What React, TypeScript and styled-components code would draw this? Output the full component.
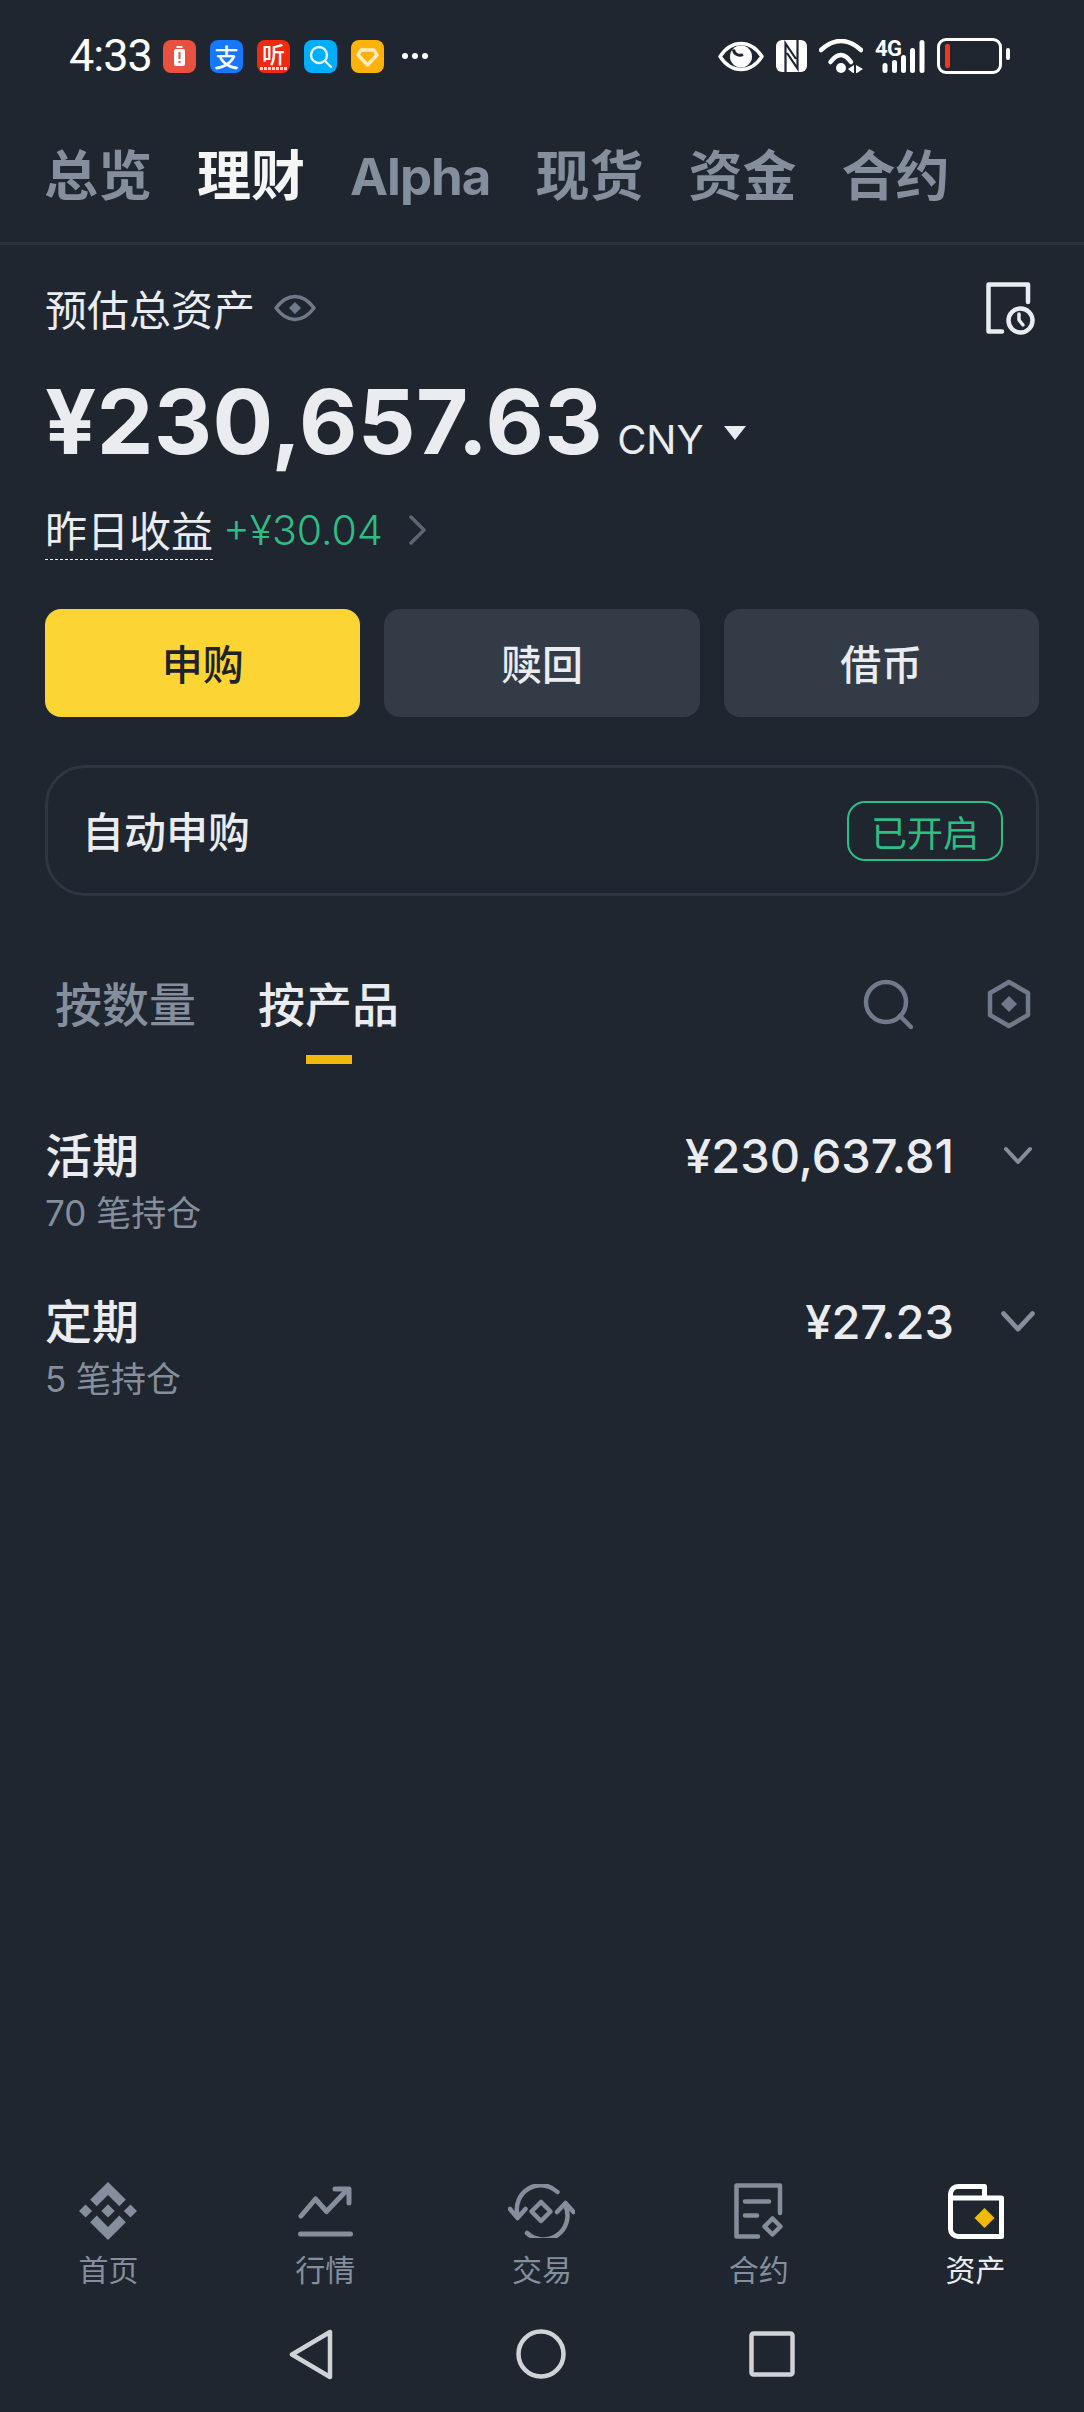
import React from "react"
import styled, { createGlobalStyle } from "styled-components"

const CJK = `"Noto Sans CJK SC", sans-serif`
const NUM = `Inter, "Noto Sans CJK SC", sans-serif`

const tabs = ["总览", "理财", "Alpha", "现货", "资金", "合约"]

export default function App() {
  return (
    <Page>
      <GlobalStyle />
      <StatusBar>
        <StatusLeft>
          <Time>4:33</Time>
          <AppIcons>
            <AppIcon $bg="#E8503F">
              <svg width="33" height="33" viewBox="0 0 33 33">
                <rect x="11" y="9" width="11" height="17" rx="2" fill="#fff" />
                <rect x="13.500" y="6" width="6" height="2" fill="#fff" />
                <rect x="15.500" y="12" width="2" height="7" fill="#E8503F" />
                <rect x="15.500" y="21" width="2" height="2" fill="#E8503F" />
              </svg>
            </AppIcon>
            <AppIcon $bg="#1677FF">
              <AppGlyph>支</AppGlyph>
            </AppIcon>
            <AppIcon $bg="#F0290F">
              <AppGlyph $top>听</AppGlyph>
              <AppIconFoot />
            </AppIcon>
            <AppIcon $bg="#00AEFF">
              <svg width="33" height="33" viewBox="0 0 33 33" fill="none" stroke="#E4F6FF" strokeWidth="2.400">
                <circle cx="15" cy="15" r="8" />
                <path d="M21 21l6 6" strokeLinecap="round" />
              </svg>
            </AppIcon>
            <AppIcon $bg="#FFB30A">
              <svg width="33" height="33" viewBox="0 0 33 33" fill="none" stroke="#FFEBC4" strokeWidth="3.400" strokeLinejoin="round">
                <path d="M10 10h13l3 5-9.500 10L7 15z" />
              </svg>
            </AppIcon>
          </AppIcons>
          <Dots>
            <i />
            <i />
            <i />
          </Dots>
        </StatusLeft>
        <StatusRight>
          <svg width="46" height="31" viewBox="0 0 46 31">
            <path d="M2 15.500C8 6.500 15 2.500 23 2.500S38 6.500 44 15.500C38 24.500 31 28.500 23 28.500S8 24.500 2 15.500Z" fill="none" stroke="#fff" strokeWidth="3.400" strokeLinejoin="round" />
            <circle cx="23" cy="15.500" r="11" fill="#fff" />
            <path d="M15.500 8.500a6.500 6.500 0 0 0 9.500 5" fill="none" stroke="#1F2630" strokeWidth="3" />
          </svg>
          <svg width="31" height="32" viewBox="0 0 31 32">
            <rect width="31" height="32" rx="6" fill="#fff" />
            <path d="M9.500 32V3.500L20 19M21.500 0v28.500L11 13" fill="none" stroke="#1F2630" strokeWidth="2.200" />
          </svg>
          <svg width="44" height="34" viewBox="0 0 44 34">
            <g fill="none" stroke="#fff" strokeWidth="4.500" strokeLinecap="round">
              <path d="M2 11Q22-7 42 11" />
              <path d="M11.500 23Q22 9 32 23" />
            </g>
            <circle cx="22" cy="29" r="5" fill="#fff" />
            <path d="M35 26v8h-1l-5-4ZM37 26v8h1l6-4Z" fill="#fff" />
          </svg>
          <svg width="50" height="33" viewBox="0 0 50 33" overflow="visible">
            <text x="0" y="16" fontFamily="Roboto, sans-serif" fontWeight="700" fontSize="22" fill="#fff" letterSpacing="-0.5">4G</text>
            <g fill="#fff">
              <rect x="7.500" y="23" width="5" height="10" rx="2.500" />
              <rect x="17" y="20" width="5" height="13" rx="2.500" />
              <rect x="26" y="15" width="5" height="18" rx="2.500" />
              <rect x="35" y="8" width="5" height="25" rx="2.500" />
              <rect x="44.500" y="0" width="5" height="33" rx="2.500" />
            </g>
          </svg>
          <Battery>
            <BatteryLevel />
            <BatteryNub />
          </Battery>
        </StatusRight>
      </StatusBar>

      <TabBar>
        {tabs.map((t, i) => (
          <Tab key={t} $active={i === 1} $latin={t === "Alpha"}>
            {t}
          </Tab>
        ))}
      </TabBar>

      <Content>
        <SummaryHead>
          <SummaryLabel>
            预估总资产
            <svg width="42" height="28" viewBox="0 0 42 28" fill="none" stroke="#707A8A" strokeWidth="3.500">
              <path d="M2 14C8 6 14 2.500 21 2.500S34 6 40 14C34 22 28 25.500 21 25.500S8 22 2 14Z" strokeLinejoin="round" />
              <path d="M21 8l6 6-6 6-6-6Z" fill="#707A8A" stroke="none" />
            </svg>
          </SummaryLabel>
          <svg width="50" height="53" viewBox="0 0 50 53" fill="none" stroke="#EAECEF" strokeWidth="4.500" strokeLinecap="round" strokeLinejoin="round">
            <path d="M16 49.500H2.500V2.500H42V20" />
            <circle cx="34.500" cy="38.500" r="12" />
            <path d="M33 32v6l4 5" strokeWidth="3.500" />
          </svg>
        </SummaryHead>

        <AmountRow>
          <Amount>¥230,657.63</Amount>
          <Currency>CNY</Currency>
          <Caret />
        </AmountRow>

        <EarningsRow>
          <EarningsLabel>昨日收益</EarningsLabel>
          <EarningsValue>+¥30.04</EarningsValue>
          <svg width="18" height="30" viewBox="0 0 18 30" fill="none" stroke="#5E6673" strokeWidth="3.500" strokeLinecap="round" strokeLinejoin="round">
            <path d="M2 2l13 13L2 28" />
          </svg>
        </EarningsRow>

        <Actions>
          <ActionButton $primary>申购</ActionButton>
          <ActionButton>赎回</ActionButton>
          <ActionButton>借币</ActionButton>
        </Actions>

        <AutoCard>
          <AutoLabel>自动申购</AutoLabel>
          <Badge>已开启</Badge>
        </AutoCard>

        <SubTabs>
          <SubTab>按数量</SubTab>
          <SubTab $active>按产品</SubTab>
          <SubTools>
            <svg width="50" height="50" viewBox="0 0 50 50" fill="none" stroke="#707A8A" strokeWidth="4.500" strokeLinecap="round">
              <circle cx="23" cy="23" r="20" />
              <path d="M37 37l11 11" />
            </svg>
            <svg width="44" height="50" viewBox="0 0 44 50" fill="none" stroke="#707A8A" strokeWidth="4.500" strokeLinejoin="round">
              <path d="M22 3l19 11v22L22 47 3 36V14Z" />
              <path d="M22 17l8 8-8 8-8-8Z" fill="#707A8A" stroke="none" />
            </svg>
          </SubTools>
        </SubTabs>

        <ProductList>
          <ProductRow>
            <div>
              <ProductName>活期</ProductName>
              <ProductMeta>70 笔持仓</ProductMeta>
            </div>
            <ProductValue>
              ¥230,637.81
              <Chevron />
            </ProductValue>
          </ProductRow>
          <ProductRow>
            <div>
              <ProductName>定期</ProductName>
              <ProductMeta>5 笔持仓</ProductMeta>
            </div>
            <ProductValue>
              ¥27.23
              <Chevron $large />
            </ProductValue>
          </ProductRow>
        </ProductList>
      </Content>

      <BottomNav>
        <NavItem>
          <NavIcon>
            <svg width="58" height="58" viewBox="0 0 126.640 126.640" fill="#848E9C">
              <path d="M38.730 53.200l24.590-24.580 24.600 24.600 14.300-14.310L63.320 0 24.430 38.900zM0 63.310l14.300-14.300 14.310 14.300-14.310 14.300zM38.730 73.410l24.590 24.590 24.600-24.600 14.310 14.290-38.900 38.910-38.910-38.880-.02-.02zM98.030 63.310l14.300-14.300 14.310 14.300-14.310 14.300zM77.830 63.300L63.320 48.780 48.810 63.280l14.510 14.500z" />
            </svg>
          </NavIcon>
          <NavLabel>首页</NavLabel>
        </NavItem>
        <NavItem>
          <NavIcon>
            <svg width="55" height="52" viewBox="0 0 55 52" fill="none" stroke="#848E9C" strokeWidth="5" strokeLinecap="round" strokeLinejoin="round">
              <path d="M3 31l14.500-17 11 12.500L49 5" />
              <path d="M37 4h14v14" />
              <path d="M2.500 49h50" />
            </svg>
          </NavIcon>
          <NavLabel>行情</NavLabel>
        </NavItem>
        <NavItem>
          <NavIcon>
            <svg width="67" height="54" viewBox="0 0 67 54" fill="none" stroke="#848E9C" strokeWidth="4.500" strokeLinecap="round" strokeLinejoin="round">
              <path d="M9.500 31A24 24 0 0 1 49.500 8" />
              <path d="M2 25l7.500 9 8-9" />
              <path d="M19 49A24 24 0 0 0 57.500 22" />
              <path d="M49 28l8.500-9 8 9" />
              <path d="M33 18l9.500 9.500L33 37l-9.500-9.500Z" />
            </svg>
          </NavIcon>
          <NavLabel>交易</NavLabel>
        </NavItem>
        <NavItem>
          <NavIcon>
            <svg width="50" height="56" viewBox="0 0 50 56" fill="none" stroke="#848E9C" strokeWidth="4.500" strokeLinecap="round" strokeLinejoin="round">
              <path d="M24 53.500H2.500V2.500H46V30" />
              <path d="M11 18.500h24M11 32.500h12" />
              <path d="M38.500 35.500l8 8-8 8-8-8Z" />
            </svg>
          </NavIcon>
          <NavLabel>合约</NavLabel>
        </NavItem>
        <NavItem>
          <NavIcon>
            <svg width="56" height="55" viewBox="0 0 56 55" fill="none" stroke="#fff" strokeWidth="5" strokeLinejoin="round">
              <path d="M2.500 14V10a7.500 7.500 0 0 1 7.500-7.500h26.500V14" />
              <path d="M2.500 14h51v38.500H10a7.500 7.500 0 0 1-7.500-7.500Z" />
              <path d="M36.500 24l10 10-10 10-10-10Z" fill="#F0B90B" stroke="none" />
            </svg>
          </NavIcon>
          <NavLabel $active>资产</NavLabel>
        </NavItem>
      </BottomNav>

      <SystemBar>
        <svg width="44" height="51" viewBox="0 0 44 51" fill="none" stroke="#D0D2D6" strokeWidth="4.500" strokeLinejoin="round">
          <path d="M41 3v45L3 25.500Z" />
        </svg>
        <svg width="50" height="50" viewBox="0 0 50 50" fill="none" stroke="#D0D2D6" strokeWidth="4.500">
          <circle cx="25" cy="25" r="22.500" />
        </svg>
        <svg width="46" height="46" viewBox="0 0 46 46" fill="none" stroke="#D0D2D6" strokeWidth="4.500" strokeLinejoin="round">
          <rect x="2.500" y="2.500" width="41" height="41" rx="2" />
        </svg>
      </SystemBar>
    </Page>
  )
}

const GlobalStyle = createGlobalStyle`
  html, body {
    margin: 0;
    padding: 0;
    background: #1f2630;
  }
  * {
    box-sizing: border-box;
  }
`
const Page = styled.div`
  display: flex;
  flex-direction: column;
  width: 1084px;
  height: 2412px;
  overflow: hidden;
  background: #1f2630;
  color: #eaecef;
  font-family: ${CJK};
  svg {
    display: block;
    flex-shrink: 0;
  }
`
const StatusBar = styled.div`
  display: flex;
  align-items: center;
  justify-content: space-between;
  height: 112px;
  padding: 0 82px 0 69px;
`
const StatusLeft = styled.div`
  display: flex;
  align-items: center;
`
const Time = styled.span`
  width: 94px;
  font-family: Roboto, sans-serif;
  font-size: 45px;
  line-height: 46px;
  letter-spacing: -1px;
  color: #fff;
`
const AppIcons = styled.div`
  display: flex;
  gap: 14px;
`
const AppIcon = styled.div<{ $bg: string }>`
  position: relative;
  display: flex;
  align-items: center;
  justify-content: center;
  width: 33px;
  height: 33px;
  border-radius: 8px;
  background: ${(p) => p.$bg};
`
const AppGlyph = styled.span<{ $top?: boolean }>`
  color: #fff;
  font-size: ${(p) => (p.$top ? 23 : 25)}px;
  font-weight: 500;
  line-height: ${(p) => (p.$top ? 24 : 33)}px;
  margin-bottom: ${(p) => (p.$top ? 7 : 0)}px;
`
const AppIconFoot = styled.i`
  position: absolute;
  left: 3px;
  right: 3px;
  bottom: 3px;
  height: 3px;
  background: repeating-linear-gradient(90deg, #ffd9d0 0 3px, transparent 3px 4px);
`
const Dots = styled.div`
  display: flex;
  gap: 4px;
  margin-left: 18px;
  i {
    width: 6px;
    height: 6px;
    border-radius: 50%;
    background: #fff;
  }
`
const StatusRight = styled.div`
  display: flex;
  align-items: center;
  gap: 12px;
`
const Battery = styled.div`
  position: relative;
  display: flex;
  align-items: center;
  width: 65px;
  height: 36px;
  padding-left: 5px;
  border: 3px solid #fff;
  border-radius: 9px;
`
const BatteryLevel = styled.i`
  width: 5px;
  height: 24px;
  border-radius: 2px;
  background: #f0381a;
`
const BatteryNub = styled.i`
  position: absolute;
  right: -11px;
  top: 7px;
  width: 4px;
  height: 12px;
  border-radius: 2px;
  background: #fff;
`
const TabBar = styled.div`
  display: flex;
  align-items: center;
  gap: 45px;
  height: 133px;
  padding: 0 45px 0 44px;
  border-bottom: 3px solid #2b3139;
`
const Tab = styled.span<{ $active?: boolean; $latin?: boolean }>`
  font-family: ${NUM};
  font-size: ${(p) => (p.$latin ? 51 : 54)}px;
  font-weight: 700;
  line-height: 70px;
  letter-spacing: ${(p) => (p.$latin ? "-1px" : "0")};
  color: ${(p) => (p.$active ? "#f5f5f5" : "#848e9c")};
`
const Content = styled.div`
  display: flex;
  flex-direction: column;
  flex: 1;
  padding: 0 45px;
`
const SummaryHead = styled.div`
  display: flex;
  align-items: center;
  justify-content: space-between;
  height: 60px;
  margin-top: 33px;
  padding-right: 3px;
`
const SummaryLabel = styled.div`
  display: flex;
  align-items: center;
  gap: 19px;
  font-size: 42px;
  line-height: 60px;
  color: #eaecef;
`
const AmountRow = styled.div`
  display: flex;
  align-items: baseline;
  height: 100px;
  margin-top: 34px;
`
const Amount = styled.span`
  font-family: ${NUM};
  font-size: 90px;
  font-weight: 700;
  line-height: 100px;
  letter-spacing: 0.5px;
  color: #eaecef;
`
const Currency = styled.span`
  margin-left: 14px;
  font-family: ${NUM};
  font-size: 40px;
  font-weight: 400;
  color: #eaecef;
`
const Caret = styled.i`
  align-self: flex-start;
  width: 0;
  height: 0;
  margin: 54px 0 0 20px;
  border-left: 11px solid transparent;
  border-right: 11px solid transparent;
  border-top: 14px solid #eaecef;
`
const EarningsRow = styled.div`
  display: flex;
  align-items: center;
  height: 60px;
  margin-top: 28px;
`
const EarningsLabel = styled.span`
  font-size: 42px;
  line-height: 58px;
  height: 60px;
  border-bottom: 1px dashed #eaecef;
`
const EarningsValue = styled.span`
  margin: 0 26px 0 10px;
  font-family: ${NUM};
  font-size: 41px;
  font-weight: 300;
  color: #2ebd85;
`
const Actions = styled.div`
  display: grid;
  grid-template-columns: repeat(3, 1fr);
  gap: 24px;
  margin-top: 49px;
`
const ActionButton = styled.div<{ $primary?: boolean }>`
  display: flex;
  align-items: center;
  justify-content: center;
  height: 108px;
  padding-bottom: 3px;
  border-radius: 16px;
  font-size: 41px;
  font-weight: 500;
  background: ${(p) => (p.$primary ? "#fcd535" : "#333b47")};
  color: ${(p) => (p.$primary ? "#1e2329" : "#eaecef")};
`
const AutoCard = styled.div`
  display: flex;
  align-items: center;
  justify-content: space-between;
  height: 131px;
  margin-top: 48px;
  padding: 0 33px 0 34px;
  border: 3px solid #2f3642;
  border-radius: 40px;
`
const AutoLabel = styled.span`
  padding-bottom: 3px;
  font-size: 42px;
  font-weight: 500;
`
const Badge = styled.span`
  display: flex;
  align-items: center;
  justify-content: center;
  width: 156px;
  height: 60px;
  border: 2px solid #2ebd85;
  border-radius: 18px;
  font-size: 36px;
  color: #2ebd85;
`
const SubTabs = styled.div`
  position: relative;
  display: flex;
  align-items: center;
  gap: 62px;
  height: 70px;
  margin-top: 71px;
  padding-left: 10px;
`
const SubTab = styled.span<{ $active?: boolean }>`
  position: relative;
  font-size: 47px;
  font-weight: 500;
  line-height: 70px;
  color: ${(p) => (p.$active ? "#eaecef" : "#848e9c")};
  &::after {
    content: "";
    display: ${(p) => (p.$active ? "block" : "none")};
    position: absolute;
    left: 48px;
    bottom: -27px;
    width: 46px;
    height: 9px;
    background: #f0b90b;
  }
`
const SubTools = styled.div`
  display: flex;
  align-items: center;
  gap: 74px;
  margin: 4px 0 0 auto;
  padding-right: 8px;
`
const ProductList = styled.div`
  display: flex;
  flex-direction: column;
  gap: 42px;
  margin-top: 83px;
`
const ProductRow = styled.div`
  display: flex;
  justify-content: space-between;
  align-items: flex-start;
  height: 124px;
`
const ProductName = styled.div`
  font-size: 47px;
  font-weight: 500;
  line-height: 66px;
  color: #eaecef;
`
const ProductMeta = styled.div`
  margin-top: 2px;
  font-family: ${NUM};
  font-size: 35px;
  line-height: 50px;
  color: #848e9c;
`
const ProductValue = styled.div`
  display: flex;
  align-items: center;
  gap: 49px;
  margin-top: 3px;
  padding-right: 6px;
  font-family: ${NUM};
  font-size: 47px;
  font-weight: 500;
  line-height: 66px;
  color: #eaecef;
`
const ChevronSvg = styled.svg<{ $large?: boolean }>`
  width: ${(p) => (p.$large ? 36 : 30)}px;
  height: ${(p) => (p.$large ? 24 : 20)}px;
  margin-left: ${(p) => (p.$large ? -3 : 0)}px;
  margin-right: ${(p) => (p.$large ? -3 : 0)}px;
`
const Chevron = ({ $large }: { $large?: boolean }) => (
  <ChevronSvg $large={$large} viewBox="0 0 30 20" fill="none" stroke="#848e9c" strokeWidth="4" strokeLinecap="round" strokeLinejoin="round">
    <path d="M3 3l12 13L27 3" />
  </ChevronSvg>
)
const BottomNav = styled.div`
  display: grid;
  grid-template-columns: repeat(5, 1fr);
`
const NavItem = styled.div`
  display: flex;
  flex-direction: column;
  align-items: center;
`
const NavIcon = styled.div`
  display: flex;
  align-items: center;
  justify-content: center;
  height: 60px;
`
const NavLabel = styled.span<{ $active?: boolean }>`
  margin-top: 6px;
  font-size: 30px;
  line-height: 42px;
  color: ${(p) => (p.$active ? "#eaecef" : "#848e9c")};
`
const SystemBar = styled.div`
  display: flex;
  align-items: center;
  justify-content: center;
  gap: 183px;
  height: 112px;
  margin-top: 11px;
  padding-bottom: 4px;
`
